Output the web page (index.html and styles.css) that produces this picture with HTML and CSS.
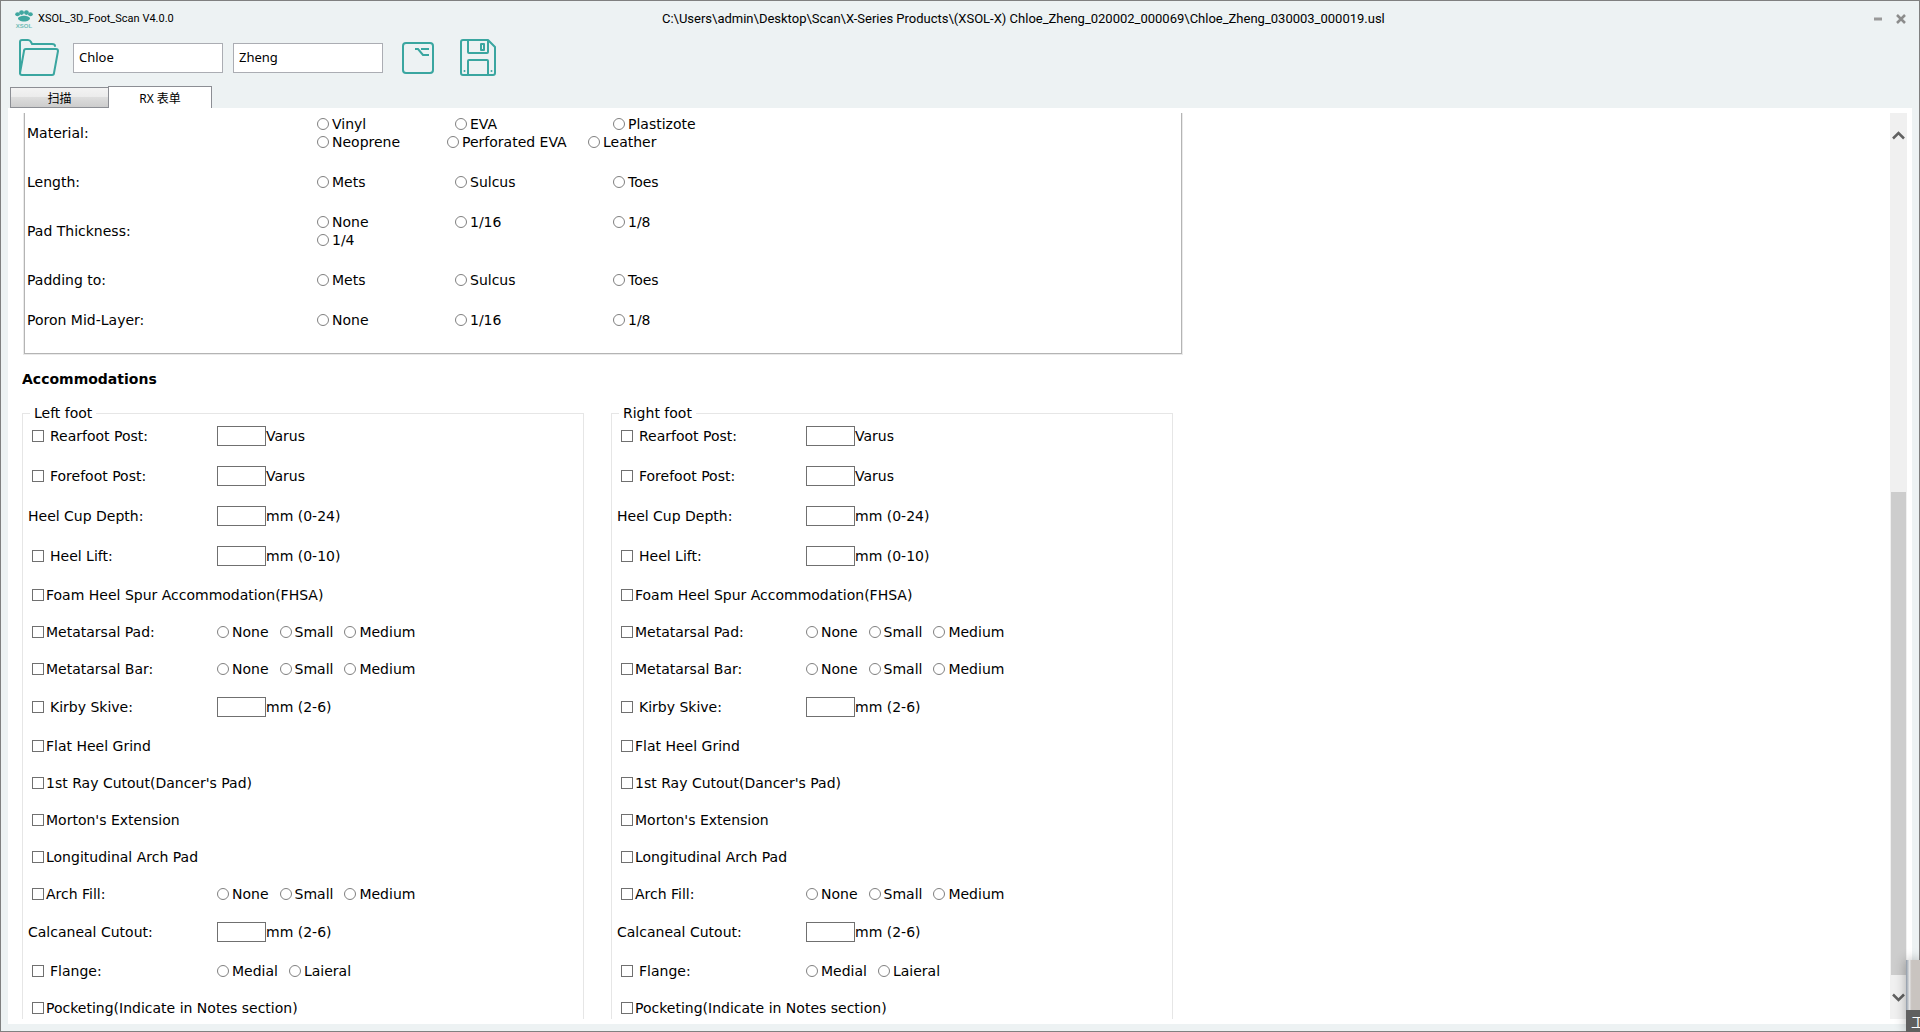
FILE: index.html
```html
<!DOCTYPE html>
<html lang="zh-CN">
<head>
<meta charset="utf-8">
<title>XSOL_3D_Foot_Scan V4.0.0</title>
<link rel="stylesheet" href="styles.css">
</head>
<body>
<div class="window">
  <header class="titlebar">
    <svg class="logo" viewBox="0 0 18 18" aria-hidden="true">
      <g fill="#3fa7a0"><ellipse cx="6.600" cy="2.600" rx="2.400" ry="2.300"/><ellipse cx="11.400" cy="2.600" rx="2.400" ry="2.300"/><ellipse cx="2.600" cy="4.300" rx="2.400" ry="2"/><ellipse cx="15.400" cy="4.300" rx="2.400" ry="2"/><path d="M9 5.500c3.500 0 6 1.500 6 3S12.500 11.500 9 11.500 3 10 3 8.500 5.500 5.500 9 5.500z"/></g>
      <path d="M3 6.500q6-3 12 0" fill="none" stroke="#edf2f3" stroke-width="0.800"/>
      <text x="9" y="17.500" text-anchor="middle" class="logo-text">XSOL</text>
    </svg>
    <span class="app-name">XSOL_3D_Foot_Scan V4.0.0</span>
    <span class="file-path">C:\Users\admin\Desktop\Scan\X-Series Products\(XSOL-X) Chloe_Zheng_020002_000069\Chloe_Zheng_030003_000019.usl</span>
    <div class="window-buttons">
      <button type="button" aria-label="Minimize"><svg width="10" height="10" viewBox="0 0 10 10"><path d="M1 5h8" stroke="#999" stroke-width="3"/></svg></button>
      <button type="button" aria-label="Close"><svg width="10" height="10" viewBox="0 0 10 10"><path d="M1 1l8 8M9 1l-8 8" stroke="#8c8c8c" stroke-width="2.500"/></svg></button>
    </div>
  </header>

  <div class="toolbar">
    <button type="button" class="tool" aria-label="Open">
      <svg width="42" height="38" viewBox="0 0 42 38"><g fill="none" stroke="#3aa6a0" stroke-width="2" stroke-linejoin="round" stroke-linecap="round"><path d="M2 34V3q0-2 2-2h6q2 0 3 2l1 2h20q3 0 3 2"/><path d="M8 10h30q2 0 2 2l-4 22q0 2-2 2H4q-2 0-2-2L6 12q0-2 2-2z"/></g></svg>
    </button>
    <input class="name-field" type="text" value="Chloe" aria-label="First name">
    <input class="name-field" type="text" value="Zheng" aria-label="Last name">
    <button type="button" class="tool tool-option" aria-label="Option">
      <svg width="34" height="32" viewBox="0 0 34 32"><g fill="none" stroke="#3aa6a0" stroke-width="2"><rect x="2" y="1" width="30" height="30" rx="3"/><path d="M14 7h3l5 6h6M20 7h8"/></g></svg>
    </button>
    <button type="button" class="tool" aria-label="Save">
      <svg width="38" height="38" viewBox="0 0 38 38"><g fill="none" stroke="#3aa6a0" stroke-width="2" stroke-linejoin="round"><path d="M4 1h25l7 7v26q0 2-2 2H4q-2 0-2-2V3q0-2 2-2z"/><path d="M9 1v12q0 1 1 1h18q1 0 1-1V1M9 36V22q0-1 1-1h18q1 0 1 1v14"/><path d="M22 5h3v6h-3z"/></g><g fill="#3aa6a0"><circle cx="5.500" cy="32" r="1"/><circle cx="32.500" cy="32" r="1"/></g></svg>
    </button>
  </div>

  <nav class="tabs" role="tablist">
    <button type="button" class="tab" role="tab">扫描</button>
    <button type="button" class="tab active" role="tab" aria-selected="true">RX 表单</button>
  </nav>

  <main class="panel">
    <form class="form" id="rx-form">
      <section class="cover">
        <div class="cover-row"><span>Material:</span>
          <div class="choices">
            <label><input type="radio" name="material">Vinyl</label><label><input type="radio" name="material">EVA</label><label><input type="radio" name="material">Plastizote</label>
          </div>
          <div class="choices wide">
            <label><input type="radio" name="material">Neoprene</label><label><input type="radio" name="material">Perforated EVA</label><label><input type="radio" name="material">Leather</label>
          </div>
        </div>
        <div class="cover-row"><span>Length:</span>
          <div class="choices">
            <label><input type="radio" name="length">Mets</label><label><input type="radio" name="length">Sulcus</label><label><input type="radio" name="length">Toes</label>
          </div>
        </div>
        <div class="cover-row"><span>Pad Thickness:</span>
          <div class="choices">
            <label><input type="radio" name="thickness">None</label><label><input type="radio" name="thickness">1/16</label><label><input type="radio" name="thickness">1/8</label>
          </div>
          <div class="choices">
            <label><input type="radio" name="thickness">1/4</label>
          </div>
        </div>
        <div class="cover-row"><span>Padding to:</span>
          <div class="choices">
            <label><input type="radio" name="padding">Mets</label><label><input type="radio" name="padding">Sulcus</label><label><input type="radio" name="padding">Toes</label>
          </div>
        </div>
        <div class="cover-row"><span>Poron Mid-Layer:</span>
          <div class="choices">
            <label><input type="radio" name="poron">None</label><label><input type="radio" name="poron">1/16</label><label><input type="radio" name="poron">1/8</label>
          </div>
        </div>
      </section>

      <h2>Accommodations</h2>

      <div class="feet">
        <fieldset class="foot">
          <legend>Left foot</legend>
          <div class="row measure"><label class="check spaced"><input type="checkbox">Rearfoot Post:</label><label class="amount"><input type="text" aria-label="Rearfoot Post">Varus</label></div>
          <div class="row measure"><label class="check spaced"><input type="checkbox">Forefoot Post:</label><label class="amount"><input type="text" aria-label="Forefoot Post">Varus</label></div>
          <div class="row measure"><span class="plain">Heel Cup Depth:</span><label class="amount"><input type="text" aria-label="Heel Cup Depth">mm (0-24)</label></div>
          <div class="row measure"><label class="check spaced"><input type="checkbox">Heel Lift:</label><label class="amount"><input type="text" aria-label="Heel Lift">mm (0-10)</label></div>
          <div class="row"><label class="check"><input type="checkbox">Foam Heel Spur Accommodation(FHSA)</label></div>
          <div class="row"><label class="check"><input type="checkbox">Metatarsal Pad:</label><div class="sizes"><label><input type="radio" name="l-pad">None</label><label><input type="radio" name="l-pad">Small</label><label><input type="radio" name="l-pad">Medium</label></div></div>
          <div class="row"><label class="check"><input type="checkbox">Metatarsal Bar:</label><div class="sizes"><label><input type="radio" name="l-bar">None</label><label><input type="radio" name="l-bar">Small</label><label><input type="radio" name="l-bar">Medium</label></div></div>
          <div class="row measure"><label class="check spaced"><input type="checkbox">Kirby Skive:</label><label class="amount"><input type="text" aria-label="Kirby Skive">mm (2-6)</label></div>
          <div class="row"><label class="check"><input type="checkbox">Flat Heel Grind</label></div>
          <div class="row"><label class="check"><input type="checkbox">1st Ray Cutout(Dancer's Pad)</label></div>
          <div class="row"><label class="check"><input type="checkbox">Morton's Extension</label></div>
          <div class="row"><label class="check"><input type="checkbox">Longitudinal Arch Pad</label></div>
          <div class="row"><label class="check"><input type="checkbox">Arch Fill:</label><div class="sizes"><label><input type="radio" name="l-fill">None</label><label><input type="radio" name="l-fill">Small</label><label><input type="radio" name="l-fill">Medium</label></div></div>
          <div class="row measure"><span class="plain">Calcaneal Cutout:</span><label class="amount"><input type="text" aria-label="Calcaneal Cutout">mm (2-6)</label></div>
          <div class="row"><label class="check spaced"><input type="checkbox">Flange:</label><div class="sizes"><label><input type="radio" name="l-flange">Medial</label><label><input type="radio" name="l-flange">Laieral</label></div></div>
          <div class="row"><label class="check"><input type="checkbox">Pocketing(Indicate in Notes section)</label></div>
        </fieldset>
        <fieldset class="foot">
          <legend>Right foot</legend>
          <div class="row measure"><label class="check spaced"><input type="checkbox">Rearfoot Post:</label><label class="amount"><input type="text" aria-label="Rearfoot Post">Varus</label></div>
          <div class="row measure"><label class="check spaced"><input type="checkbox">Forefoot Post:</label><label class="amount"><input type="text" aria-label="Forefoot Post">Varus</label></div>
          <div class="row measure"><span class="plain">Heel Cup Depth:</span><label class="amount"><input type="text" aria-label="Heel Cup Depth">mm (0-24)</label></div>
          <div class="row measure"><label class="check spaced"><input type="checkbox">Heel Lift:</label><label class="amount"><input type="text" aria-label="Heel Lift">mm (0-10)</label></div>
          <div class="row"><label class="check"><input type="checkbox">Foam Heel Spur Accommodation(FHSA)</label></div>
          <div class="row"><label class="check"><input type="checkbox">Metatarsal Pad:</label><div class="sizes"><label><input type="radio" name="r-pad">None</label><label><input type="radio" name="r-pad">Small</label><label><input type="radio" name="r-pad">Medium</label></div></div>
          <div class="row"><label class="check"><input type="checkbox">Metatarsal Bar:</label><div class="sizes"><label><input type="radio" name="r-bar">None</label><label><input type="radio" name="r-bar">Small</label><label><input type="radio" name="r-bar">Medium</label></div></div>
          <div class="row measure"><label class="check spaced"><input type="checkbox">Kirby Skive:</label><label class="amount"><input type="text" aria-label="Kirby Skive">mm (2-6)</label></div>
          <div class="row"><label class="check"><input type="checkbox">Flat Heel Grind</label></div>
          <div class="row"><label class="check"><input type="checkbox">1st Ray Cutout(Dancer's Pad)</label></div>
          <div class="row"><label class="check"><input type="checkbox">Morton's Extension</label></div>
          <div class="row"><label class="check"><input type="checkbox">Longitudinal Arch Pad</label></div>
          <div class="row"><label class="check"><input type="checkbox">Arch Fill:</label><div class="sizes"><label><input type="radio" name="r-fill">None</label><label><input type="radio" name="r-fill">Small</label><label><input type="radio" name="r-fill">Medium</label></div></div>
          <div class="row measure"><span class="plain">Calcaneal Cutout:</span><label class="amount"><input type="text" aria-label="Calcaneal Cutout">mm (2-6)</label></div>
          <div class="row"><label class="check spaced"><input type="checkbox">Flange:</label><div class="sizes"><label><input type="radio" name="r-flange">Medial</label><label><input type="radio" name="r-flange">Laieral</label></div></div>
          <div class="row"><label class="check"><input type="checkbox">Pocketing(Indicate in Notes section)</label></div>
        </fieldset>
      </div>
    </form>
    <div class="scrollbar">
      <button type="button" aria-label="Scroll up"><svg width="13" height="9" viewBox="0 0 13 9"><path d="M1 7.500L6.500 2 12 7.500" fill="none" stroke="#606060" stroke-width="2.500"/></svg></button>
      <div class="track"><div class="thumb"></div></div>
      <button type="button" aria-label="Scroll down"><svg width="13" height="9" viewBox="0 0 13 9"><path d="M1 1.500L6.500 7 12 1.500" fill="none" stroke="#606060" stroke-width="2.500"/></svg></button>
    </div>
  </main>
</div>
<aside class="preview"><div class="preview-picture"></div><div class="preview-caption">工</div></aside>
</body>
</html>
```
FILE: styles.css
```css
* { box-sizing: border-box; }

body {
  margin: 0;
  overflow: hidden;
  color: #000;
  font: 14px/18px "DejaVu Sans", Verdana, sans-serif;
}

button { padding: 0; border: 0; background: none; color: inherit; font: inherit; }
svg { display: block; }

.window {
  display: flex;
  flex-direction: column;
  height: 100vh;
  padding: 0 7px 7px 7px;
  border: 1px solid #808080;
  background: #edf2f3;
}

/* Title bar */
.titlebar {
  display: grid;
  grid-template-columns: 18px auto 1fr auto;
  align-items: center;
  gap: 5px;
  height: 35px;
  padding: 0 6px 0 7px;
  font: 11px/18px Roboto, "Noto Sans CJK SC", sans-serif;
}
.logo { width: 18px; height: 18px; }
.logo-text { fill: #6fbcb6; font: bold 6px "Liberation Sans", sans-serif; }
.file-path { font-size: 13px; text-align: center; }
.window-buttons { display: flex; gap: 13px; }

/* Toolbar */
.toolbar {
  display: flex;
  align-items: center;
  height: 44px;
  padding-left: 10px;
}
.name-field {
  width: 150px;
  height: 30px;
  margin-left: 10px;
  padding: 0 5px 3px;
  border: 1px solid #abadb3;
  background: #fff;
  font: 13px/18px "Noto Sans", "Noto Sans CJK SC", sans-serif;
}
.name-field:first-of-type { margin-left: 13px; }
.tool-option { margin: 0 24px 0 18px; }

/* Tabs */
.tabs {
  display: flex;
  align-items: flex-end;
  height: 28px;
  padding-left: 2px;
  font: 12px/18px "Noto Sans", "Noto Sans CJK SC", sans-serif;
}
.tab {
  width: 98px;
  height: 21px;
  padding-top: 2px;
  border: 1px solid #8c8e94;
  border-right: 0;
  background: linear-gradient(#f3f3f3 0, #ebebeb 50%, #dddddd 50%, #cdcdcd);
}
.tab.active {
  width: 104px;
  height: 22px;
  border-right: 1px solid #8c8e94;
  border-bottom: 0;
  background: #fff;
}

/* Scrolled form */
.panel {
  display: grid;
  grid-template-columns: 1fr 17px;
  flex: 1;
  min-height: 0;
  padding: 5px 5px 5px 14px;
  background: #fff;
}
.form { min-height: 0; overflow: hidden; }

.form input { margin: 0; flex: none; }
.form input[type="checkbox"],
.form input[type="radio"] {
  appearance: none;
  width: 12px;
  height: 12px;
  border: 1px solid #707070;
  background: #fff;
}
.form input[type="radio"] { border-color: #808080; border-radius: 50%; }
.form label { display: flex; align-items: center; white-space: nowrap; }

.cover {
  display: flex;
  flex-direction: column;
  gap: 22px;
  width: 1158px;
  margin-left: 2px;
  padding: 2px 0 24px 2px;
  border: 1px solid #b4b4b4;
  border-top: 0;
  box-shadow: 0 0 0 1px #eaeaea;
}
.cover-row {
  display: grid;
  grid-template-columns: 290px 1fr;
  align-items: center;
}
.cover-row > span { grid-row: 1 / span 2; }
.cover-row > .choices { grid-column: 2; }
.choices { display: grid; grid-template-columns: 138px 158px auto; }
.choices.wide { grid-template-columns: 130px 141px auto; }
.choices input { margin-right: 3px; }

h2 { margin: 16px 0; font-size: 14px; line-height: 18px; }

.feet { display: flex; gap: 27px; }
.foot {
  width: 562px;
  margin: 0;
  padding: 0;
  border: 1px solid #e6e6e6;
}
.foot legend { margin: 0 0 -6px 7px; padding: 0 4px; line-height: 18px; }
.row {
  display: grid;
  grid-template-columns: 194px 1fr;
  align-items: center;
  height: 37px;
}
.row.measure { height: 40px; }
.plain { padding-left: 5px; }
.check { padding-left: 9px; gap: 2px; }
.check.spaced { gap: 6px; }
.amount input { width: 49px; height: 20px; border: 1px solid #707070; }
.sizes { display: flex; gap: 11px; }
.sizes label { gap: 3px; }

/* Scrollbar */
.scrollbar {
  display: flex;
  flex-direction: column;
  background: #f0f0f0;
}
.scrollbar button { display: grid; place-items: center; height: 44px; }
.track { display: flex; flex-direction: column; justify-content: flex-end; flex: 1; padding: 0 1px; }
.thumb { height: 59%; background: #cdcdcd; }

/* Thumbnail window resting on the corner */
.preview {
  position: absolute;
  right: 0;
  bottom: 0;
  width: 14px;
  overflow: hidden;
  box-shadow: 0 0 12px rgba(0, 0, 0, 0.3);
}
.preview-picture { height: 50px; background: linear-gradient(90deg, #8f9aa8, #e4e4e4 25%, #c9c4c0 40%, #c9c4c0); }
.preview-caption {
  height: 22px;
  padding-left: 5px;
  background: #5f5f5f;
  color: #fff;
  font: 14px/22px "Noto Sans CJK SC", sans-serif;
  white-space: nowrap;
}
```
